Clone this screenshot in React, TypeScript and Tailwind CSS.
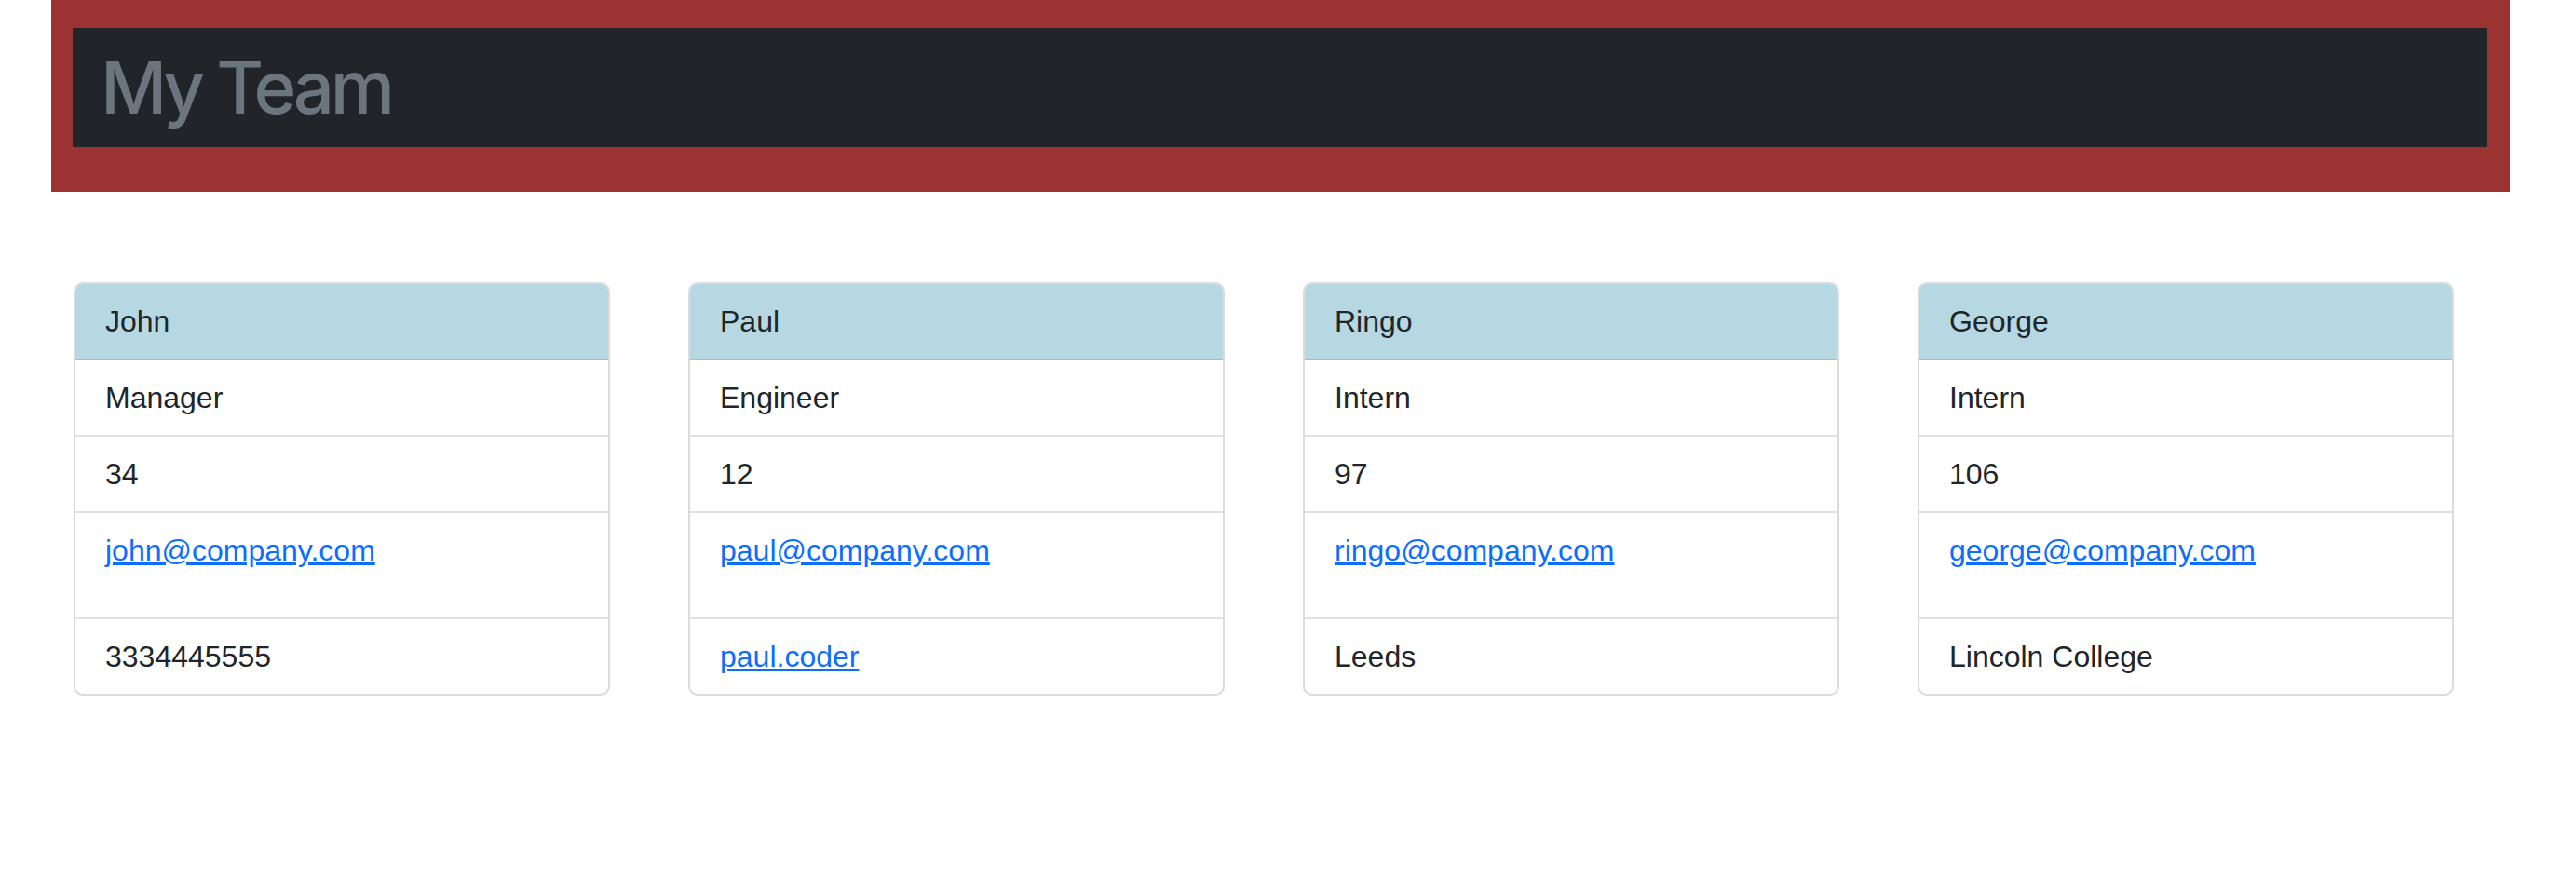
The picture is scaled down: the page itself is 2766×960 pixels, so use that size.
type Member = {
  name: string;
  role: string;
  id: string;
  email: string;
  extra: string;
  extraIsLink?: boolean;
};

const team: Member[] = [
  { name: "John", role: "Manager", id: "34", email: "john@company.com", extra: "3334445555" },
  { name: "Paul", role: "Engineer", id: "12", email: "paul@company.com", extra: "paul.coder", extraIsLink: true },
  { name: "Ringo", role: "Intern", id: "97", email: "ringo@company.com", extra: "Leeds" },
  { name: "George", role: "Intern", id: "106", email: "george@company.com", extra: "Lincoln College" },
];

function MemberCard({ member }: { member: Member }) {
  return (
    <div className="w-[576px] rounded-[10px] border-2 border-[#dadbdc] bg-white overflow-hidden">
      <div className="bg-[#b6d8e3] border-b-2 border-[#9fbfca] px-[32px] py-[16px] leading-[48px]">
        {member.name}
      </div>
      <ul>
        <li className="border-b-2 border-[#dee2e6] px-[32px] py-[16px] leading-[48px]">{member.role}</li>
        <li className="border-b-2 border-[#dee2e6] px-[32px] py-[16px] leading-[48px]">{member.id}</li>
        <li className="border-b-2 border-[#dee2e6] px-[32px] py-[16px] leading-[48px]">
          <p className="mb-[32px]">
            <a href={`mailto:${member.email}`} className="text-[#0d6efd] underline">
              {member.email}
            </a>
          </p>
        </li>
        <li className="px-[32px] py-[16px] leading-[48px]">
          {member.extraIsLink ? (
            <a href="#" className="text-[#0d6efd] underline">
              {member.extra}
            </a>
          ) : (
            member.extra
          )}
        </li>
      </ul>
    </div>
  );
}

export default function App() {
  return (
    <div className="min-h-[960px] bg-white text-[32px] text-[#212529] font-['Liberation_Sans',Arial,sans-serif]">
      <div className="ml-[55px] w-[2640px]">
        {/* header band */}
        <div className="bg-[#9a3331] pl-[23px] pr-[25px] pt-[30px] pb-[48px]">
          <div className="bg-[#212529] px-[30px] py-[16px]">
            <h1 className="font-['Inter',sans-serif] text-[78px] leading-[96px] font-medium tracking-[-4.4px] text-[#6c757d]">
              My Team
            </h1>
          </div>
        </div>

        <div className="grid grid-cols-4 mt-[97px]">
          {team.map((m) => (
            <div key={m.name} className="px-[24px]">
              <MemberCard member={m} />
            </div>
          ))}
        </div>
      </div>
    </div>
  );
}
